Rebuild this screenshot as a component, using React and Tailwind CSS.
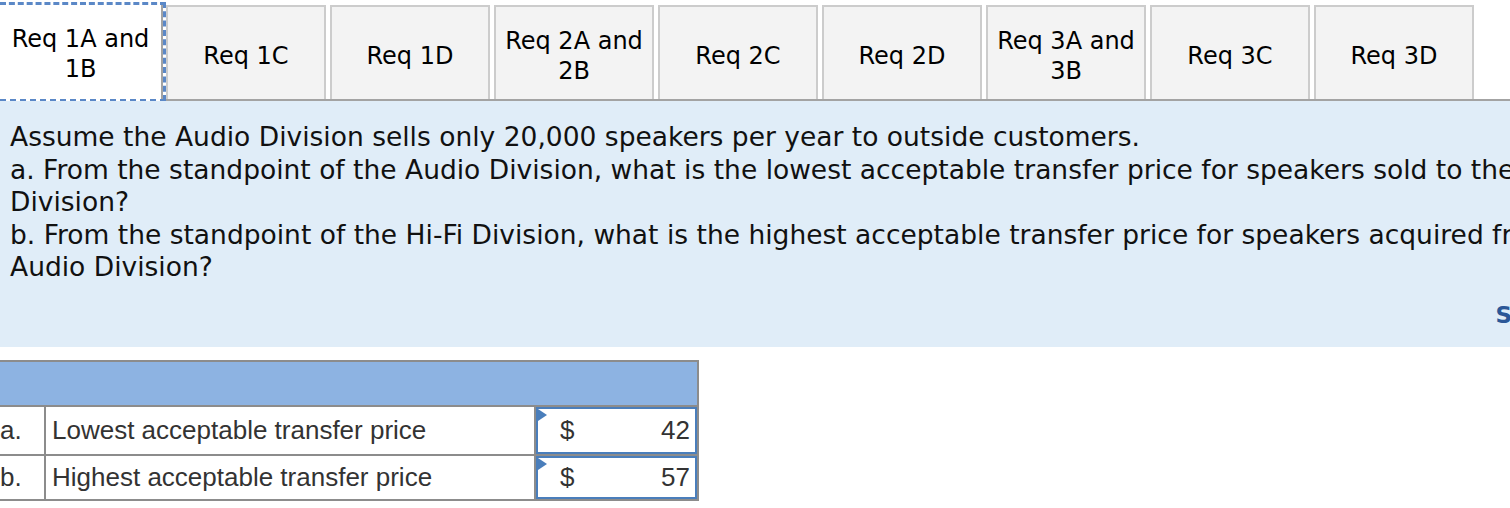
import React from "react";

const tabs = [
  "Req 1C",
  "Req 1D",
  "Req 2A and 2B",
  "Req 2C",
  "Req 2D",
  "Req 3A and 3B",
  "Req 3C",
  "Req 3D",
];

const rows = [
  { key: "a.", label: "Lowest acceptable transfer price", value: "42", cls: "h-[49px] border-b-2 border-[#8c8c8c]" },
  { key: "b.", label: "Highest acceptable transfer price", value: "57", cls: "h-[43px]" },
];

function TabLabel({ text }) {
  // split "Req 2A and 2B" onto two lines like the original
  const parts = text.split(" and ");
  if (parts.length === 1) return <span>{text}</span>;
  return (
    <span>
      {parts[0]} and
      <br />
      {parts[1]}
    </span>
  );
}

export default function App() {
  return (
    <div className="w-[1510px] h-[508px] overflow-hidden bg-white font-['DejaVu_Sans','Verdana',sans-serif] text-black">
      {/* tab strip */}
      <div className="flex items-end h-[101px] w-[1510px]">
        <div className="mt-[2px] h-[99px] w-[166px] shrink-0 border-t-[3px] border-r-[3px] border-b-[2px] border-dashed border-[#5b88c7]">
          <div className="h-full w-full bg-white border-r-2 border-[#a3a3a3] flex items-center justify-center text-center text-[24px] leading-[30px] pt-[4px]">
            <TabLabel text="Req 1A and 1B" />
          </div>
        </div>
        <div className="flex-1 flex gap-[4px] border-b-2 border-[#a3a3a3] h-[96px]">
          {tabs.map((t) => (
            <div
              key={t}
              className="w-[160px] h-[94px] shrink-0 bg-[#f3f3f3] border-2 border-b-0 border-[#cccccc] flex items-center justify-center text-center text-[24px] leading-[30px] pt-[6px]"
            >
              <TabLabel text={t} />
            </div>
          ))}
        </div>
      </div>

      {/* question panel */}
      <div className="w-[1660px] h-[246px] bg-[#e0edf8] pl-[10px] pr-[10px] pt-[20px] text-[26.5px] leading-[32.5px] text-[#111]">
        <div className="whitespace-nowrap">
          Assume the Audio Division sells only 20,000 speakers per year to outside customers.
        </div>
        <div className="whitespace-nowrap">
          a. From the standpoint of the Audio Division, what is the lowest acceptable transfer price for speakers sold to the Hi-Fi
        </div>
        <div className="whitespace-nowrap">Division?</div>
        <div className="whitespace-nowrap">
          b. From the standpoint of the Hi-Fi Division, what is the highest acceptable transfer price for speakers acquired from the
        </div>
        <div className="whitespace-nowrap">Audio Division?</div>
        <div className="flex justify-end mt-[16px]">
          <span className="font-bold text-[#2b5797] text-[23px] leading-[30px] whitespace-nowrap">Show less ▲</span>
        </div>
      </div>

      {/* answer table */}
      <div className="mt-[13px] -ml-[16px] w-[715px] border-2 border-[#8c8c8c] font-['Liberation_Sans','Arial',sans-serif] text-[26px] text-[#333]">
        <div className="h-[45px] bg-[#8db3e2] border-b-2 border-[#8c8c8c]" />
        {rows.map((r) => (
          <div key={r.key} className={"flex " + r.cls}>
            <div className="w-[60px] shrink-0 border-r-2 border-[#8c8c8c] flex items-center pl-[14px]">
              {r.key}
            </div>
            <div className="w-[490px] shrink-0 border-r-2 border-[#8c8c8c] flex items-center pl-[6px]">
              {r.label}
            </div>
            <div className="relative flex-1 border-2 border-[#4a7ebb] flex items-center justify-between pl-[22px] pr-[5px]">
              <svg
                className="absolute left-0 top-0"
                width="9"
                height="12"
                viewBox="0 0 9 12"
              >
                <polygon points="0,0 9,6 0,12" fill="#4a7ebb" />
              </svg>
              <span>$</span>
              <span>{r.value}</span>
            </div>
          </div>
        ))}
      </div>
    </div>
  );
}
